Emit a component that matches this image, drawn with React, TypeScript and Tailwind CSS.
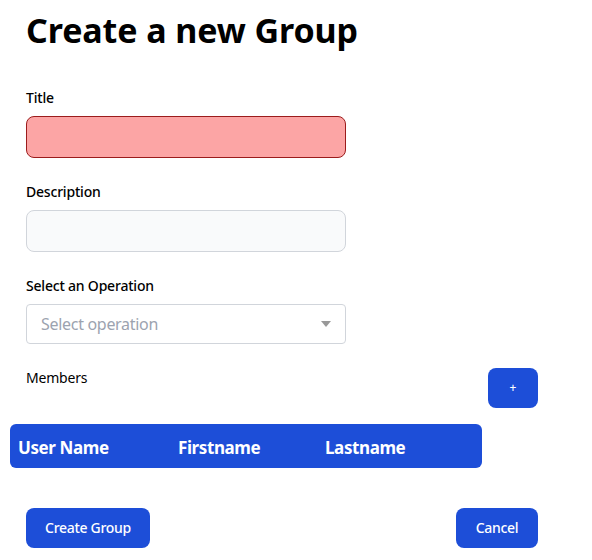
import React from 'react';

export default function App() {
  return (
    <div className="min-h-screen bg-white text-black font-['Noto_Sans',sans-serif]">
      <div className="ml-[26px] w-[512px] pt-[10px]">
        <h1 className="text-[34px] font-bold leading-10 tracking-[-0.1px] mb-[38px]">Create a new Group</h1>

        <label className="block text-sm font-medium leading-5 tracking-[-0.2px] mb-2">Title</label>
        <input
          type="text"
          className="block w-80 h-[42px] rounded-lg border border-[#9b1c1c] bg-[#fca5a5] p-2.5 text-sm mb-6 outline-none"
        />

        <label className="block text-sm font-medium leading-5 tracking-[-0.2px] mb-2">Description</label>
        <input
          type="text"
          className="block w-80 h-[42px] rounded-lg border border-[#d1d5db] bg-[#f9fafb] p-2.5 text-sm mb-6 outline-none"
        />

        <label className="block text-sm font-medium leading-5 tracking-[-0.2px] mb-2">Select an Operation</label>
        <div className="flex items-center justify-between w-80 h-10 rounded border border-[#d1d5db] bg-white pl-[14px] pr-[14px] mb-6">
          <span className="text-base tracking-[-0.3px] text-[#9ca3af]">Select operation</span>
          <svg width="10" height="6" viewBox="0 0 10 6" className="fill-[#999999]">
            <path d="M0 0h10L5 6z" />
          </svg>
        </div>

        <div className="flex items-start justify-between mb-4">
          <span className="text-sm leading-5 tracking-[-0.2px]">Members</span>
          <button className="h-10 w-[50px] rounded-lg bg-[#1d4ed8] text-xs font-medium text-white">+</button>
        </div>
      </div>

      <div className="ml-[10px] w-[472px] h-11 pt-[3px] rounded-md bg-[#1d4ed8] flex items-center text-[17px] font-bold tracking-[-0.4px] text-white mb-10">
        <span className="pl-2 w-[168px]">User Name</span>
        <span className="w-[147px]">Firstname</span>
        <span>Lastname</span>
      </div>

      <div className="ml-[26px] w-[512px] flex justify-between">
        <button className="h-10 w-[124px] rounded-lg bg-[#1d4ed8] text-sm font-medium tracking-[-0.3px] text-white">Create Group</button>
        <button className="h-10 w-[82px] rounded-lg bg-[#1d4ed8] text-sm font-medium tracking-[-0.3px] text-white">Cancel</button>
      </div>
    </div>
  );
}
